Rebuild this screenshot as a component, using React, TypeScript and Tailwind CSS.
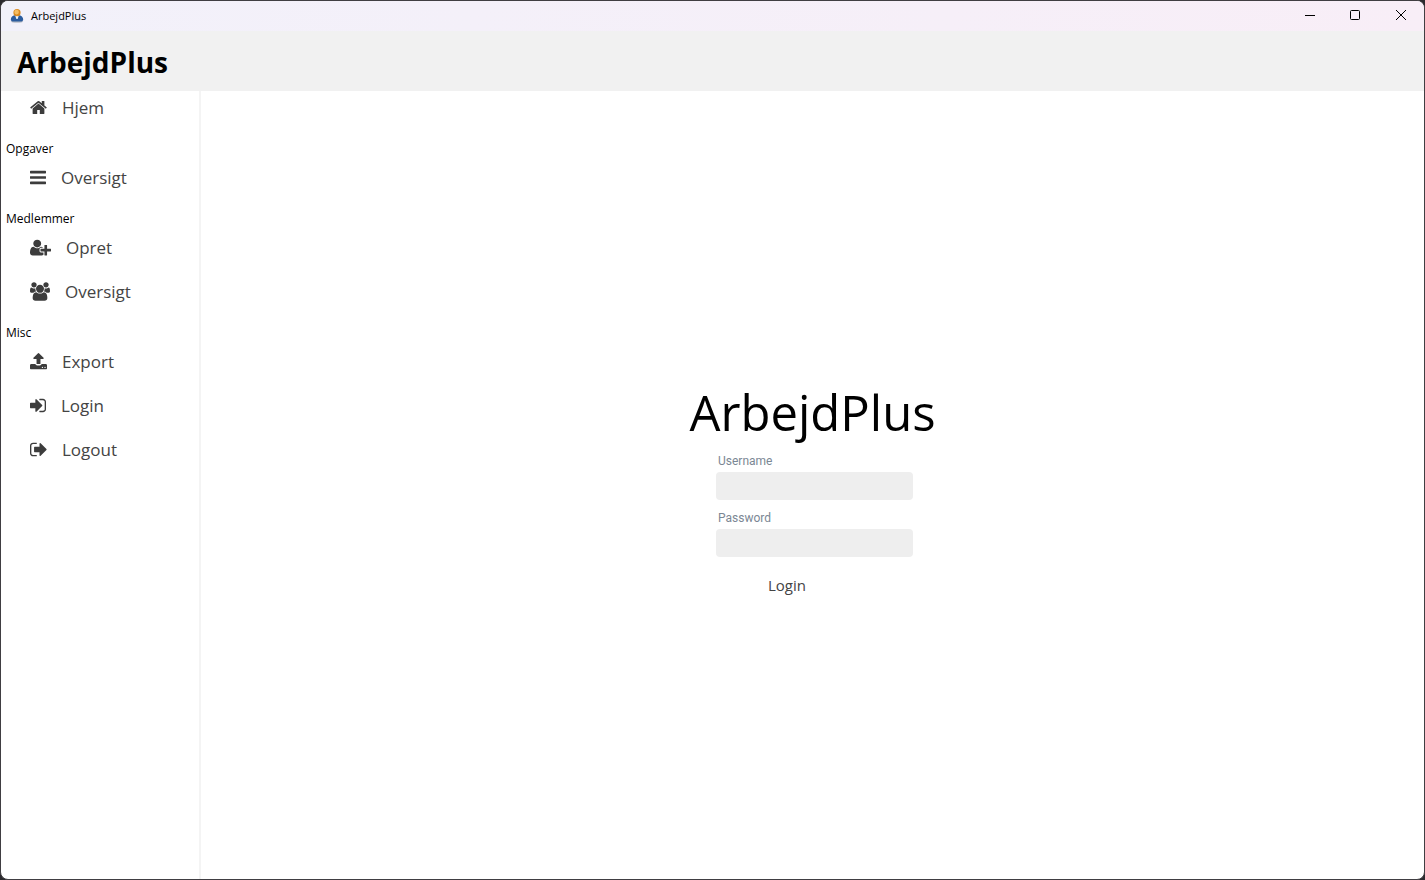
import type { ReactNode } from "react";

type Glyph = { viewBox: string; size: string; d: string };

const glyphs: Record<string, Glyph> = {
  home: {
    viewBox: "64 0 1664 1792",
    size: "w-[17px]",
    d: "M1472 992v480q0 26-19 45t-45 19h-384v-384h-256v384h-384q-26 0-45-19t-19-45v-480q0-1 .5-3t.5-3l575-474 575 474q1 2 1 6zm223-69l-62 74q-8 9-21 11h-3q-13 0-21-7l-692-577-692 577q-12 8-24 7-13-2-21-11l-62-74q-8-10-7-23.5t11-21.5l719-599q32-26 76-26t76 26l244 204v-195q0-14 9-23t23-9h192q14 0 23 9t9 23v408l219 182q10 8 11 21.5t-7 23.5z",
  },
  bars: {
    viewBox: "128 0 1536 1792",
    size: "w-4",
    d: "M1664 1344v128q0 26-19 45t-45 19h-1408q-26 0-45-19t-19-45v-128q0-26 19-45t45-19h1408q26 0 45 19t19 45zm0-512v128q0 26-19 45t-45 19h-1408q-26 0-45-19t-19-45v-128q0-26 19-45t45-19h1408q26 0 45 19t19 45zm0-512v128q0 26-19 45t-45 19h-1408q-26 0-45-19t-19-45v-128q0-26 19-45t45-19h1408q26 0 45 19t19 45z",
  },
  userPlus: {
    viewBox: "0 0 2048 1792",
    size: "w-[21px]",
    d: "M704 896q-159 0-271.5-112.5t-112.5-271.5 112.5-271.5 271.5-112.5 271.5 112.5 112.5 271.5-112.5 271.5-271.5 112.5zm960 128h352q13 0 22.5 9.5t9.5 22.5v192q0 13-9.5 22.5t-22.5 9.5h-352v352q0 13-9.5 22.5t-22.5 9.5h-192q-13 0-22.5-9.5t-9.5-22.5v-352h-352q-13 0-22.5-9.5t-9.5-22.5v-192q0-13 9.5-22.5t22.5-9.5h352v-352q0-13 9.5-22.5t22.5-9.5h192q13 0 22.5 9.5t9.5 22.5v352zm-736 224q0 52 38 90t90 38h256v238q-68 50-171 50h-874q-121 0-194-69t-73-190q0-53 3.5-103.5t14-109 26.5-108.5 43-97.5 62-81 85.5-53.5 111.5-20q19 0 39 17 79 61 154.5 91.5t164.5 30.5 164.5-30.5 154.5-91.5q20-17 39-17 132 0 217 96h-223q-52 0-90 38t-38 90v192z",
  },
  users: {
    viewBox: "0 0 1920 1792",
    size: "w-5",
    d: "M593 896q-162 5-265 128h-134q-82 0-138-40.5t-56-118.5q0-353 124-353 6 0 43.5 21t97.5 42.5 119 21.5q67 0 133-23-5 37-5 66 0 139 81 256zm1071 637q0 120-73 189.5t-194 69.5h-874q-121 0-194-69.5t-73-189.5q0-53 3.5-103.5t14-109 26.5-108.5 43-97.5 62-81 85.5-53.5 111.5-20q10 0 43 21.5t73 48 107 48 135 21.5 135-21.5 107-48 73-48 43-21.5q61 0 111.5 20t85.5 53.5 62 81 43 97.5 26.5 108.5 14 109 3.5 103.5zm-1024-1277q0 106-75 181t-181 75-181-75-75-181 75-181 181-75 181 75 75 181zm704 384q0 159-112.5 271.5t-271.5 112.5-271.5-112.5-112.5-271.5 112.5-271.5 271.5-112.5 271.5 112.5 112.5 271.5zm576 225q0 78-56 118.5t-138 40.5h-134q-103-123-265-128 81-117 81-256 0-29-5-66 66 23 133 23 59 0 119-21.5t97.5-42.5 43.5-21q124 0 124 353zm-128-609q0 106-75 181t-181 75-181-75-75-181 75-181 181-75 181 75 75 181z",
  },
  upload: {
    viewBox: "64 0 1664 1792",
    size: "w-[17px]",
    d: "M1344 1472q0-26-19-45t-45-19-45 19-19 45 19 45 45 19 45-19 19-45zm256 0q0-26-19-45t-45-19-45 19-19 45 19 45 45 19 45-19 19-45zm128-224v320q0 40-28 68t-68 28h-1472q-40 0-68-28t-28-68v-320q0-40 28-68t68-28h427q21 56 70.5 92t110.5 36h256q61 0 110.5-36t70.5-92h427q40 0 68 28t28 68zm-325-648q-17 40-59 40h-256v448q0 26-19 45t-45 19h-256q-26 0-45-19t-19-45v-448h-256q-42 0-59-40-17-39 14-69l448-448q18-19 45-19t45 19l448 448q31 30 14 69z",
  },
  signIn: {
    viewBox: "128 0 1536 1792",
    size: "w-4",
    d: "M1312 896q0 26-19 45l-544 544q-19 19-45 19t-45-19-19-45v-288h-448q-26 0-45-19t-19-45v-384q0-26 19-45t45-19h448v-288q0-26 19-45t45-19 45 19l544 544q19 19 19 45zm352-352v704q0 119-84.5 203.5t-203.5 84.5h-320q-13 0-22.5-9.5t-9.5-22.5q0-4-1-20t-.5-26.5 3-23.5 10-19.5 20.5-6.5h320q66 0 113-47t47-113v-704q0-66-47-113t-113-47h-312l-11.5-1-11.5-3-8-5.5-7-9-2-13.5q0-4-1-20t-.5-26.5 3-23.5 10-19.5 20.5-6.5h320q119 0 203.5 84.5t84.5 203.5z",
  },
  signOut: {
    viewBox: "64 0 1600 1792",
    size: "w-[17px]",
    d: "M704 1440q0 4 1 20t.5 26.5-3 23.5-10 19.5-20.5 6.5h-320q-119 0-203.5-84.5t-84.5-203.5v-704q0-119 84.5-203.5t203.5-84.5h320q13 0 22.5 9.5t9.5 22.5q0 4 1 20t.5 26.5-3 23.5-10 19.5-20.5 6.5h-320q-66 0-113 47t-47 113v704q0 66 47 113t113 47h312l11.5 1 11.5 3 8 5.5 7 9 2 13.5zm928-544q0 26-19 45l-544 544q-19 19-45 19t-45-19-19-45v-288h-448q-26 0-45-19t-19-45v-384q0-26 19-45t45-19h448v-288q0-26 19-45t45-19 45 19l544 544q19 19 19 45z",
  },
};

function NavItem({ icon, children }: { icon: keyof typeof glyphs; children: ReactNode }) {
  const glyph = glyphs[icon];
  return (
    <button type="button" className="flex h-[34px] w-full items-center gap-[15px] pl-[29px] text-left text-[17px] leading-6 text-[#444444]">
      <svg viewBox={glyph.viewBox} preserveAspectRatio="xMinYMid meet" className={`${glyph.size} mb-px h-[19px] shrink-0`} fill="#3c3c3c" aria-hidden="true">
        <path d={glyph.d} />
      </svg>
      <span>{children}</span>
    </button>
  );
}

function NavGroup({ title, children }: { title: string; children: ReactNode }) {
  return (
    <section className="pt-4">
      <h2 className="mb-1 pl-[5px] text-[12px] leading-4 text-black">{title}</h2>
      <div className="flex flex-col gap-[10px]">{children}</div>
    </section>
  );
}

function AppIcon() {
  return (
    <svg viewBox="0 0 14 14" className="size-[14px]" aria-hidden="true">
      <ellipse cx="7" cy="12.4" rx="6" ry="1.4" fill="#b9bcc6" />
      <path d="M.8 11C.8 8.200 2.400 6.900 4.600 6.300h4.800c2.200.6 3.800 1.900 3.800 4.700-.1.900-1.200 1.500-2.500 1.500H3.300C2 12.500.9 11.900.8 11z" fill="#2b5c9e" />
      <path d="M5.200 6.600h3.600L7.600 10H6.400z" fill="#eef3f8" />
      <circle cx="7" cy="3.700" r="3.600" fill="#d98a22" />
      <circle cx="6.600" cy="3.100" r="2.300" fill="#f4bd62" />
    </svg>
  );
}

function Field({ id, label, type }: { id: string; label: string; type: string }) {
  return (
    <div className="flex flex-col">
      <label htmlFor={id} className="pb-[3px] pl-0.5 font-['Roboto',sans-serif] text-[12px] leading-4 text-[#7b8794]">
        {label}
      </label>
      <input id={id} name={id} type={type} className="h-7 w-full rounded-[4px] bg-[#eeeeee] px-2 text-[14px] outline-none" />
    </div>
  );
}

export default function App() {
  return (
    <div className="flex min-h-screen bg-[#2b2a2e] font-['Open_Sans','Noto_Sans',sans-serif]">
      <div className="flex flex-1 flex-col overflow-hidden rounded-[8px] border border-[#403e42] bg-white">
        <div className="flex h-[30px] items-center justify-between bg-linear-to-r from-[#f2f1fa] to-[#f8eef7]">
          <div className="flex items-center gap-[7px] pl-[9px] text-[11px] leading-4 text-black">
            <AppIcon />
            <span>ArbejdPlus</span>
          </div>
          <div className="flex h-full pb-0.5">
            <button type="button" aria-label="Minimize" className="flex w-[45px] items-center justify-center">
              <svg viewBox="0 0 12 12" className="size-3" stroke="#000" fill="none" aria-hidden="true">
                <path d="M1 6.500h10" />
              </svg>
            </button>
            <button type="button" aria-label="Maximize" className="flex w-[46px] items-center justify-center">
              <svg viewBox="0 0 12 12" className="size-3" stroke="#000" fill="none" aria-hidden="true">
                <rect x="1.500" y="1.500" width="9" height="9" rx="1" />
              </svg>
            </button>
            <button type="button" aria-label="Close" className="flex w-[46px] items-center justify-center">
              <svg viewBox="0 0 12 12" className="size-3" stroke="#000" fill="none" aria-hidden="true">
                <path d="M1 1l10 10M11 1L1 11" />
              </svg>
            </button>
          </div>
        </div>
        <header className="flex h-[60px] items-center bg-[#f1f1f1] pt-0.5 pl-4">
          <h1 className="text-[28px] leading-9 font-bold text-black">ArbejdPlus</h1>
        </header>
        <div className="flex flex-1">
          <nav className="w-[200px] shrink-0 border-r-2 border-[#f4f4f4]">
            <NavItem icon="home">Hjem</NavItem>
            <NavGroup title="Opgaver">
              <NavItem icon="bars">Oversigt</NavItem>
            </NavGroup>
            <NavGroup title="Medlemmer">
              <NavItem icon="userPlus">Opret</NavItem>
              <NavItem icon="users">Oversigt</NavItem>
            </NavGroup>
            <NavGroup title="Misc">
              <NavItem icon="upload">Export</NavItem>
              <NavItem icon="signIn">Login</NavItem>
              <NavItem icon="signOut">Logout</NavItem>
            </NavGroup>
          </nav>
          <main className="flex flex-1 flex-col items-center justify-center pt-2">
            <h2 className="text-[49px] leading-[70px] text-black">ArbejdPlus</h2>
            <form className="flex flex-col pl-1" onSubmit={(event) => event.preventDefault()}>
              <div className="flex w-[197px] flex-col gap-[10px] pt-1.5">
                <Field id="username" label="Username" type="text" />
                <Field id="password" label="Password" type="password" />
              </div>
              <button type="submit" className="mt-3 mr-[55px] h-8 self-center text-[15px] leading-5 text-[#444444]">
                Login
              </button>
            </form>
          </main>
        </div>
      </div>
    </div>
  );
}
